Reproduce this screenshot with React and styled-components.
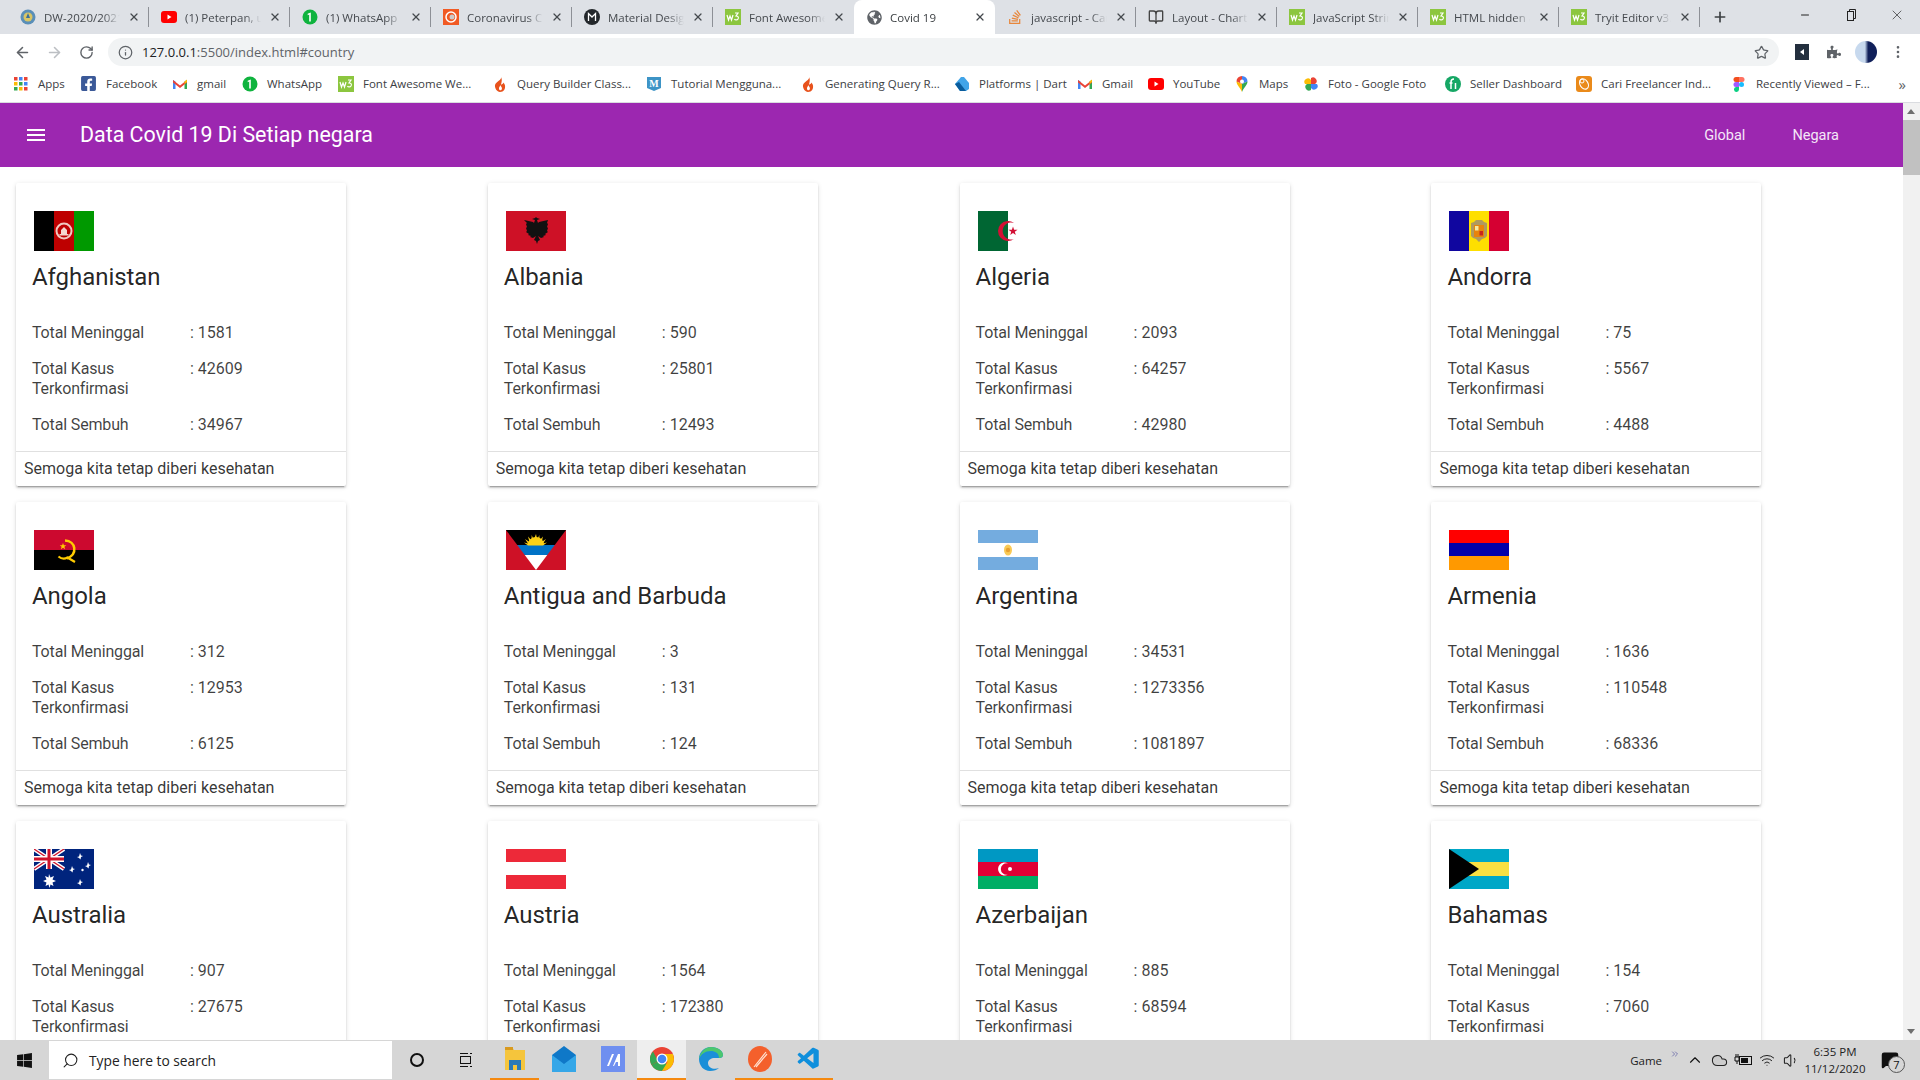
import React from 'react';
import styled, { createGlobalStyle } from 'styled-components';
import { ArrowLeft, ArrowRight, RotateCw, Info, Star, EllipsisVertical, Plus, Minus, X, Search, BookOpen, ChevronUp, ChevronsRight, Cloud, Wifi, Volume1, MessageSquare } from 'lucide-react';
import { MdMenu } from 'react-icons/md';
import { FaPuzzlePiece, FaWindows, FaGlobeAmericas, FaStackOverflow, FaFacebookSquare } from 'react-icons/fa';
import { VscVscode } from 'react-icons/vsc';

const W3 = () => (
  <svg width='16' height='16' viewBox='0 0 16 16'>
    <rect width='16' height='16' fill='#8cc63f' />
    <path d='M2 6l1.5 5 1.5-4 1.5 4L8 6M10 4h3l-2 3c2 0 3 1 2 3-1 1.500-3 1-3.500 0' fill='none' stroke='#fff' strokeWidth='1.200' />
  </svg>
);
const Youtube = () => (
  <svg width='16' height='16' viewBox='0 0 16 16'>
    <rect y='2' width='16' height='12' rx='3' fill='#f00' />
    <path d='M6.500 5.500v5l4-2.500z' fill='#fff' />
  </svg>
);
const Whatsapp = () => (
  <svg width='16' height='16' viewBox='0 0 16 16'>
    <circle cx='8' cy='8' r='7.500' fill='#0fb33e' />
    <path d='M8.800 3.500v9H7.200V5.600l-1.500.6V4.800z' fill='#fff' />
  </svg>
);
const Gmail = () => (
  <svg width='16' height='16' viewBox='0 0 16 16'>
    <path d='M1 13V4l2.500 1.500V13z' fill='#4285f4' />
    <path d='M15 13V4l-2.500 1.500V13z' fill='#34a853' />
    <path d='M1 4l7 5.500L15 4v2.500L8 12 1 6.500z' fill='#ea4335' />
    <path d='M12.500 5.500L15 3.500V6l-2.500 2z' fill='#fbbc04' />
  </svg>
);
const Flame = () => (
  <svg width='16' height='16' viewBox='0 0 16 16'>
    <path d='M9 1c1 3-5 4.500-6 8C2.500 12 5 16 8 16c4 0 5.500-3 5-6.500-.3-1.500-1-2-1.500-3C11 8 9.800 8.500 9 8.500 9.500 6 10.500 3.500 9 1z' fill='#e8521c' />
    <path d='M8 9c.5 1.500-1.500 2-1 4 .2.800 1 1.500 1.800 1.300 1.200-.4 1.500-2 .7-3.300C9 10 8.500 10 8 9z' fill='#fff' />
  </svg>
);
const Tutorial = () => (
  <svg width='16' height='16' viewBox='0 0 16 16'>
    <path d='M1 1h14v11l-7 3-7-3z' fill='#3d94c6' />
    <text x='8' y='11' fontSize='10' fontFamily='Liberation Serif, serif' fontWeight='700' fill='#fff' textAnchor='middle'>M</text>
  </svg>
);
const Dart = () => (
  <svg width='16' height='16' viewBox='0 0 16 16'>
    <path d='M1 8l6-7h3l5 6v6l-3 2H6z' fill='#41a4e8' />
    <path d='M1 8l5 7h6L5 6z' fill='#0a5c9c' />
  </svg>
);
const MapPin = () => (
  <svg width='16' height='16' viewBox='0 0 16 16'>
    <path d='M8 0a5.500 5.500 0 0 1 5.500 5.500L8 8z' fill='#4285f4' />
    <path d='M8 0a5.500 5.500 0 0 0-5.500 5.500L8 8z' fill='#ea4335' />
    <path d='M2.500 5.500C2.500 9 6 11 8 16V8z' fill='#fbbc04' />
    <path d='M13.500 5.500C13.500 9 10 11 8 16V8z' fill='#34a853' />
    <circle cx='8' cy='5.500' r='2' fill='#fff' />
  </svg>
);
const Photos = () => (
  <svg width='16' height='16' viewBox='0 0 16 16'>
    <path d='M8 8H2a3 3 0 0 1 6-4z' fill='#fbbc04' />
    <path d='M8 8V2a3 3 0 0 1 4 6z' fill='#ea4335' />
    <path d='M8 8h6a3 3 0 0 1-6 4z' fill='#4285f4' />
    <path d='M8 8v6a3 3 0 0 1-4-6z' fill='#34a853' />
  </svg>
);
const Seller = () => (
  <svg width='16' height='16' viewBox='0 0 16 16'>
    <circle cx='8' cy='8' r='8' fill='#16a765' />
    <path d='M6 13V6c0-2 1-3 3-3M4.500 7h3M10.500 7v6' fill='none' stroke='#fff' strokeWidth='1.500' />
  </svg>
);
const Freelancer = () => (
  <svg width='16' height='16' viewBox='0 0 16 16'>
    <rect width='16' height='16' rx='3' fill='#ea8a1a' />
    <ellipse cx='8' cy='8' rx='4' ry='5.500' transform='rotate(-30 8 8)' fill='none' stroke='#fff' strokeWidth='1.200' />
    <circle cx='6' cy='5' r='2' fill='none' stroke='#fff' />
  </svg>
);
const Figma = () => (
  <svg width='16' height='16' viewBox='0 0 16 16'>
    <path d='M5 1h3v5H5a2.500 2.500 0 0 1 0-5z' fill='#f24e1e' />
    <path d='M8 1h3a2.500 2.500 0 0 1 0 5H8z' fill='#ff7262' />
    <path d='M5 6h3v5H5a2.500 2.500 0 0 1 0-5z' fill='#a259ff' />
    <circle cx='10.500' cy='8.500' r='2.500' fill='#1abcfe' />
    <path d='M5 11h3v2.500a2.500 2.500 0 1 1-3-2.500z' fill='#0acf83' />
  </svg>
);
const AppsGrid = () => (
  <svg width='16' height='16' viewBox='0 0 16 16'>
    {['#ea4335', '#4285f4', '#ea4335', '#fbbc04', '#34a853', '#4285f4', '#34a853', '#fbbc04', '#ea4335'].map((c, i) => (
      <rect key={i} x={1 + (i % 3) * 5} y={1 + Math.floor(i / 3) * 5} width='3.500' height='3.500' fill={c} />
    ))}
  </svg>
);
const DwLogo = () => (
  <svg width='16' height='16' viewBox='0 0 16 16'>
    <circle cx='8' cy='8' r='7.500' fill='#5a8fb8' />
    <circle cx='8' cy='8' r='4.500' fill='#d9c565' />
    <path d='M8 4l2 5H6z' fill='#3b6f98' />
  </svg>
);
const CoronaLogo = () => (
  <svg width='16' height='16' viewBox='0 0 16 16'>
    <rect width='16' height='16' fill='#f15a24' />
    <circle cx='8' cy='8' r='5' fill='none' stroke='#fff' strokeWidth='1.500' />
    <circle cx='9' cy='8' r='2.500' fill='#ccc' />
  </svg>
);
const MaterialLogo = () => (
  <svg width='16' height='16' viewBox='0 0 16 16'>
    <circle cx='8' cy='8' r='8' fill='#23272b' />
    <path d='M4.500 12V4.500L8 8l3.500-3.500V12' fill='none' stroke='#fff' strokeWidth='1.300' />
  </svg>
);

const tabs = [
  { title: 'DW-2020/2021 - Dumbways', icon: <DwLogo />, sep: true },
  { title: '(1) Peterpan, untuk', icon: <Youtube />, sep: true },
  { title: '(1) WhatsApp', icon: <Whatsapp />, sep: true },
  { title: 'Coronavirus COVID-19', icon: <CoronaLogo />, sep: true },
  { title: 'Material Design', icon: <MaterialLogo />, sep: true },
  { title: 'Font Awesome Icons', icon: <W3 />, sep: false },
  { title: 'Covid 19', icon: <FaGlobeAmericas size={15} color='#5f6368' />, active: true },
  { title: 'javascript - Can', icon: <FaStackOverflow size={16} color='#e8863a' />, sep: true },
  { title: 'Layout - Chart.js', icon: <BookOpen size={16} color='#444' />, sep: true },
  { title: 'JavaScript String', icon: <W3 />, sep: true },
  { title: 'HTML hidden at', icon: <W3 />, sep: true },
  { title: 'Tryit Editor v3.6', icon: <W3 />, sep: true },
];

const bookmarks = [
  { label: 'Apps', icon: <AppsGrid />, width: 67 },
  { label: 'Facebook', icon: <FaFacebookSquare size={17} color='#3b5998' />, width: 92 },
  { label: 'gmail', icon: <Gmail />, width: 70 },
  { label: 'WhatsApp', icon: <Whatsapp />, width: 96 },
  { label: 'Font Awesome We...', icon: <W3 />, width: 154 },
  { label: 'Query Builder Class...', icon: <Flame />, width: 154 },
  { label: 'Tutorial Mengguna...', icon: <Tutorial />, width: 154 },
  { label: 'Generating Query R...', icon: <Flame />, width: 154 },
  { label: 'Platforms | Dart', icon: <Dart />, width: 123 },
  { label: 'Gmail', icon: <Gmail />, width: 71 },
  { label: 'YouTube', icon: <Youtube />, width: 86 },
  { label: 'Maps', icon: <MapPin />, width: 69 },
  { label: 'Foto - Google Foto', icon: <Photos />, width: 142 },
  { label: 'Seller Dashboard', icon: <Seller />, width: 131 },
  { label: 'Cari Freelancer Ind...', icon: <Freelancer />, width: 155 },
  { label: 'Recently Viewed – F...', icon: <Figma />, width: 150 },
];

const flags = {
  Afghanistan: (
    <>
      <rect width='20' height='40' fill='#000' />
      <rect x='20' width='20' height='40' fill='#be0000' />
      <rect x='40' width='20' height='40' fill='#009900' />
      <circle cx='30' cy='20' r='7.500' fill='none' stroke='#f0c8c0' strokeWidth='2' />
      <path d='M25.500 23h9v1.500h-9zM27 19l3-3 3 3v4h-6z' fill='#f4d8d0' />
    </>
  ),
  Albania: (
    <>
      <rect width='60' height='40' fill='#ce1126' />
      <path d='M18 9l9 2 1 1 1-3-3-1 3-1 1-1 1 1 3 1-3 1 1 3 1-1 9-2-1 3 1 1-1 3 1 1-1 3 1 1-3 2 1 1-3 1 1 1-3 1-3-2 2 4-2 1-1 3-1-3-2-1 2-4-3 2-3-1 1-1-3-1 1-1-3-2 1-1-1-3 1-1-1-3 1-1z' fill='#111' />
    </>
  ),
  Algeria: (
    <>
      <rect width='30' height='40' fill='#006633' />
      <path d='M36 12A10 10 0 1 0 36 28A8.500 8.500 0 1 1 36 12Z' fill='#d21034' />
      <path d='M35 15.500l1.100 3.200 3.400.1-2.700 2 1 3.200-2.800-1.900-2.800 1.900 1-3.200-2.700-2 3.400-.1z' fill='#d21034' />
    </>
  ),
  Andorra: (
    <>
      <rect width='20' height='40' fill='#10069f' />
      <rect x='20' width='20' height='40' fill='#fedf00' />
      <rect x='40' width='20' height='40' fill='#d50032' />
      <path d='M22 12l3-1 2-2h6l2 2 3 1v13l-2 2-3 1-3 3-3-3-3-1-2-2z' fill='#b09a5e' />
      <rect x='25' y='14' width='10' height='12' fill='#e8840c' />
      <rect x='26' y='15' width='3.500' height='4.500' fill='#f6e9a0' />
      <rect x='30.500' y='20' width='3.500' height='4.500' fill='#c8261c' />
    </>
  ),
  Angola: (
    <>
      <rect width='60' height='20' fill='#cc092f' />
      <rect y='20' width='60' height='20' fill='#000' />
      <path d='M31 10.500C42 11 44 24 33 28.500' fill='none' stroke='#ffcb00' strokeWidth='2.500' />
      <path d='M24.500 26.500C28 29.500 31 29 33.500 27.500L41 32' fill='none' stroke='#ffcb00' strokeWidth='2.300' />
      <path d='M29 13l.9 2.300h2.400l-1.900 1.500.7 2.400-2.100-1.400-2.100 1.400.7-2.400-1.900-1.500h2.400z' fill='#ffcb00' />
    </>
  ),
  'Antigua and Barbuda': (
    <>
      <rect width='60' height='40' fill='#ce1126' />
      <path d='M0 0h60L48.750 15H11.250z' fill='#000' />
      <path d='M11.250 15H48.750L41.250 25H18.750z' fill='#0072c6' />
      <path d='M18.750 25H41.250L30 40z' fill='#fff' />
      <path d='M22 15a8 8 0 0 1 16 0z' fill='#fcd116' />
      <path d='M30 4l1.300 6 2-5 .2 5.500 3.500-4-1.500 5.500 4.500-3-3 4.500 4-1-4 3H22l-4-3 4 1-3-4.500 4.500 3L22 6.500l3.500 4 .2-5.500 2 5z' fill='#fcd116' />
    </>
  ),
  Argentina: (
    <>
      <rect width='60' height='13' fill='#74acdf' />
      <rect y='27' width='60' height='13' fill='#74acdf' />
      <ellipse cx='30' cy='20' rx='4' ry='5.500' fill='#f6b40e' opacity='0.700' />
      <circle cx='30' cy='20' r='2.200' fill='#e8a030' />
    </>
  ),
  Armenia: (
    <>
      <rect width='60' height='13' fill='#f00' />
      <rect y='13' width='60' height='13' fill='#0000aa' />
      <rect y='26' width='60' height='14' fill='#f90' />
    </>
  ),
  Australia: (
    <>
      <rect width='60' height='40' fill='#00247d' />
      <path d='M0 0l30 20M30 0L0 20' stroke='#fff' strokeWidth='4' />
      <path d='M0 0l30 20M30 0L0 20' stroke='#cf142b' strokeWidth='1.300' />
      <path d='M15 0v20M0 10h30' stroke='#fff' strokeWidth='6' />
      <path d='M15 0v20M0 10h30' stroke='#cf142b' strokeWidth='3' />
      <path d='M15 25l1.500 3.500 3.500-1.500-1.500 3.500 3.500 1.500-3.500 1.500 1 3.500-3-1.500-1 3.500-1-3.500-3 1.500 1-3.500-3.500-1.500 3.500-1.500-1.500-3.500 3.500 1.500z' fill='#fff' />
      <path d='M46 4l1 2.500 2 .5-2 1-.5 2.500L45 9l-2-1 2-.5zM54 13l1 2.500 2 .5-2 1-.5 2.500L53 18l-2-1 2-.5zM38 17l1 2.500 2 .5-2 1-.5 2.500L37 22l-2-1 2-.5zM46 30l1 2.500 2 .5-2 1-.5 2.500L45 35l-2-1 2-.5z' fill='#fff' />
      <circle cx='48.500' cy='21' r='1.200' fill='#fff' />
    </>
  ),
  Austria: (
    <>
      <rect width='60' height='13' fill='#ed2939' />
      <rect y='26' width='60' height='14' fill='#ed2939' />
    </>
  ),
  Azerbaijan: (
    <>
      <rect width='60' height='13' fill='#0098c3' />
      <rect y='13' width='60' height='14' fill='#e00034' />
      <rect y='27' width='60' height='13' fill='#00ae65' />
      <path d='M30 14.500A6.500 6.500 0 1 0 30 25.500A5.700 5.700 0 1 1 30 14.500Z' fill='#fff' />
      <circle cx='32' cy='20' r='2' fill='#fff' />
    </>
  ),
  Bahamas: (
    <>
      <rect width='60' height='40' fill='#00a7c7' />
      <rect y='13' width='60' height='14' fill='#fae042' />
      <path d='M0 0l30 20L0 40z' fill='#000' />
    </>
  ),
};

const countries = [
  { name: 'Afghanistan', deaths: 1581, cases: 42609, recovered: 34967 },
  { name: 'Albania', deaths: 590, cases: 25801, recovered: 12493 },
  { name: 'Algeria', deaths: 2093, cases: 64257, recovered: 42980 },
  { name: 'Andorra', deaths: 75, cases: 5567, recovered: 4488 },
  { name: 'Angola', deaths: 312, cases: 12953, recovered: 6125 },
  { name: 'Antigua and Barbuda', deaths: 3, cases: 131, recovered: 124 },
  { name: 'Argentina', deaths: 34531, cases: 1273356, recovered: 1081897 },
  { name: 'Armenia', deaths: 1636, cases: 110548, recovered: 68336 },
  { name: 'Australia', deaths: 907, cases: 27675 },
  { name: 'Austria', deaths: 1564, cases: 172380 },
  { name: 'Azerbaijan', deaths: 885, cases: 68594 },
  { name: 'Bahamas', deaths: 154, cases: 7060 },
];

const CountryCard = ({ name, deaths, cases, recovered }) => (
  <Card>
    <CardBody>
      <Flag viewBox='0 0 60 40'>{flags[name]}</Flag>
      <CardTitle>{name}</CardTitle>
      <Stats>
        <StatLabel>Total Meninggal</StatLabel>
        <span>: {deaths}</span>
        <StatLabel>Total Kasus Terkonfirmasi</StatLabel>
        <span>: {cases}</span>
        {recovered && <StatLabel>Total Sembuh</StatLabel>}
        {recovered && <span>: {recovered}</span>}
      </Stats>
    </CardBody>
    <CardFooter>{recovered && 'Semoga kita tetap diberi kesehatan'}</CardFooter>
  </Card>
);

const Browser = () => (
  <>
    <TabStrip>
      {tabs.map((tab) => (
        <Tab key={tab.title} $active={tab.active} $sep={tab.sep}>
          <TabIcon>{tab.icon}</TabIcon>
          <TabTitle>{tab.title}</TabTitle>
          <X size={12} strokeWidth={2.5} color='#45494e' />
        </Tab>
      ))}
      <NewTab>
        <Plus size={16} strokeWidth={2.5} color='#3c4043' />
      </NewTab>
      <WindowControls>
        <WindowButton><Minus size={12} /></WindowButton>
        <WindowButton>
          <svg width='12' height='14' viewBox='0 0 12 14' fill='none' stroke='#222'>
            <rect x='2.500' y='3.500' width='6' height='9' />
            <path d='M4.500 3.500v-2h6v9h-2' />
          </svg>
        </WindowButton>
        <WindowButton><X size={16} strokeWidth={1} /></WindowButton>
      </WindowControls>
    </TabStrip>
    <Toolbar>
      <ToolButton><ArrowLeft size={17} color='#5f6368' strokeWidth={2.200} /></ToolButton>
      <ToolButton><ArrowRight size={17} color='#bcbfc3' strokeWidth={2.200} /></ToolButton>
      <ToolButton><RotateCw size={15} color='#5f6368' strokeWidth={2.200} /></ToolButton>
      <AddressBar>
        <Info size={15} color='#5f6368' />
        <Url><b>127.0.0.1</b>:5500/index.html#country</Url>
        <Star size={15} color='#5f6368' />
      </AddressBar>
      <ToolButton>
        <svg width='14' height='16' viewBox='0 0 14 16'>
          <rect width='14' height='16' fill='#232f3e' />
          <path d='M9 5v6L5 8z' fill='#fff' />
        </svg>
      </ToolButton>
      <ToolButton><FaPuzzlePiece size={14} color='#5f6368' /></ToolButton>
      <ToolButton><Avatar /></ToolButton>
      <ToolButton><EllipsisVertical size={16} color='#5f6368' /></ToolButton>
    </Toolbar>
    <BookmarkBar>
      {bookmarks.map((item) => (
        <Bookmark key={item.label} $width={item.width}>
          {item.icon}
          <span>{item.label}</span>
        </Bookmark>
      ))}
      <BookmarkMore>»</BookmarkMore>
    </BookmarkBar>
  </>
);

const Windows = () => (
  <Taskbar>
    <StartButton><FaWindows size={17} color='#111' /></StartButton>
    <SearchBox>
      <SearchIcon size={17} color='#222' strokeWidth={1.500} />
      Type here to search
    </SearchBox>
    <ShellButton>
      <svg width='16' height='16' viewBox='0 0 16 16'><circle cx='8' cy='8' r='6' fill='none' stroke='#111' strokeWidth='2' /></svg>
    </ShellButton>
    <ShellButton>
      <svg width='16' height='18' viewBox='0 0 16 18' fill='none' stroke='#111'>
        <rect x='2.500' y='5.500' width='10' height='7' />
        <path d='M2 2.500h8M12 2.500h2M2 15.500h8M12 15.500h2' />
      </svg>
    </ShellButton>
    <AppSlot $open>
      <svg width='24' height='26' viewBox='0 0 24 26'>
        <path d='M2 1h7l2 3h11v20H2z' fill='#f5c53c' />
        <rect x='2' y='1' width='8' height='3' fill='#d99a1f' />
        <path d='M6 24V14h12v10h-4v-5h-4v5z' fill='#2a7ab8' />
      </svg>
    </AppSlot>
    <AppSlot>
      <svg width='24' height='26' viewBox='0 0 24 26'>
        <path d='M0 9L12 0l12 9v17H0z' fill='#0f78c8' />
        <path d='M0 9l12 9 12-9v17H0z' fill='#35a7e8' />
      </svg>
    </AppSlot>
    <AppSlot>
      <svg width='24' height='26' viewBox='0 0 24 26'>
        <rect width='24' height='26' fill='#6f8ff0' />
        <path d='M6 20l5-12h2l-5 12zM12 20l5-12h2v12h-2v-4h-2l-2 4z' fill='#fff' />
      </svg>
    </AppSlot>
    <AppSlot $open $active>
      <svg width='24' height='24' viewBox='0 0 24 24'>
        <circle cx='12' cy='12' r='12' fill='#ea4335' />
        <path d='M12 12L1.600 18A12 12 0 0 0 12 24l5-6z' fill='#34a853' />
        <path d='M12 7h10.800A12 12 0 0 1 12 24l5.500-9z' fill='#fbbc04' />
        <path d='M1.600 18A12 12 0 0 1 3 4.500L8 14z' fill='#34a853' />
        <circle cx='12' cy='12' r='5.500' fill='#fff' />
        <circle cx='12' cy='12' r='4.300' fill='#4285f4' />
      </svg>
    </AppSlot>
    <AppSlot>
      <svg width='24' height='26' viewBox='0 0 24 26'>
        <path d='M12 1C5 1 0 6 0 13c0 7 5 12 11 12 4 0 7-1 9-3-5 2-11 0-11-5 0-3 3-5 7-5 3 0 8 1 8-3C24 5 19 1 12 1z' fill='#1b8fd8' />
        <path d='M0 13C1 6 6 1 12 1c7 0 12 4 12 8 0 2-2 3-4 3C20 7 16 5 12 5 6 5 2 8 0 13z' fill='#4cc76f' />
      </svg>
    </AppSlot>
    <AppSlot $open>
      <svg width='24' height='26' viewBox='0 0 24 26'>
        <ellipse cx='12' cy='13' rx='12' ry='13' fill='#f4602c' />
        <path d='M6 21L18 6M8 21l11-13' stroke='#ffe0d0' strokeWidth='1.200' />
      </svg>
    </AppSlot>
    <AppSlot $open>
      <VscVscode size={26} color='#0f8fdc' />
    </AppSlot>
    <Tray>
      <GameLabel>Game</GameLabel>
      <TrayMore><ChevronsRight size={10} color='#6a6aa8' /></TrayMore>
      <TrayIcon><ChevronUp size={18} color='#111' strokeWidth={1.500} /></TrayIcon>
      <TrayIcon><Cloud size={17} color='#222' fill='#ccc' strokeWidth={1.500} /></TrayIcon>
      <TrayIcon>
        <svg width='18' height='12' viewBox='0 0 18 12' fill='none' stroke='#111'>
          <rect x='5.500' y='2.500' width='12' height='8' />
          <rect x='7.500' y='4.500' width='6' height='4' fill='#111' />
          <path d='M1 3h4v4H1zM2 0v3M4 0v3M3 7v3' />
        </svg>
      </TrayIcon>
      <TrayIcon><Wifi size={16} color='#222' strokeWidth={1.500} /></TrayIcon>
      <TrayIcon><Volume1 size={17} color='#222' strokeWidth={1.500} /></TrayIcon>
      <Clock>
        <span>6:35 PM</span>
        <span>11/12/2020</span>
      </Clock>
      <Notification>
        <MessageSquare size={18} color='#111' fill='#111' />
        <NotificationBadge>7</NotificationBadge>
      </Notification>
    </Tray>
  </Taskbar>
);

const App = () => (
  <>
    <GlobalStyle />
    <Screen>
      <Browser />
      <Viewport>
        <Page>
          <Navbar>
            <MdMenu size={24} color='#fff' />
            <Brand>Data Covid 19 Di Setiap negara</Brand>
            <NavLinks>
              <NavLink>Global</NavLink>
              <NavLink>Negara</NavLink>
            </NavLinks>
          </Navbar>
          <CardGrid>
            {countries.map((country) => (
              <CountryCard key={country.name} {...country} />
            ))}
          </CardGrid>
        </Page>
        <Scrollbar>
          <ScrollArrow />
          <ScrollThumb />
          <ScrollArrow $down />
        </Scrollbar>
      </Viewport>
      <Windows />
    </Screen>
  </>
);

export default App;

const GlobalStyle = createGlobalStyle`
  html, body {
    margin: 0;
    height: 100%;
    overflow: hidden;
  }
  * {
    box-sizing: border-box;
  }
`;

const Screen = styled.div`
  display: flex;
  flex-direction: column;
  width: 1920px;
  height: 1080px;
  overflow: hidden;
  background-color: #fff;
  font-family: Roboto, 'Liberation Sans', sans-serif;
`;

const TabStrip = styled.div`
  display: flex;
  align-items: stretch;
  height: 34px;
  padding-left: 8px;
  background-color: #dee1e6;
  font-family: 'Open Sans', 'Liberation Sans', sans-serif;
`;

const Tab = styled.div`
  position: relative;
  display: flex;
  align-items: center;
  gap: 8px;
  width: 141px;
  padding: 0 9px 0 12px;
  font-size: 11.5px;
  color: ${(props) => (props.$active ? '#3c4043' : '#45494e')};
  background-color: ${(props) => (props.$active ? '#fff' : 'transparent')};
  border-radius: ${(props) => (props.$active ? '8px 8px 0 0' : '0')};

  ${(props) =>
    props.$sep &&
    `&::after {
      content: '';
      position: absolute;
      right: 0;
      top: 7px;
      bottom: 7px;
      width: 1px;
      background-color: #8d9096;
    }`}
`;

const TabIcon = styled.span`
  display: flex;
  align-items: center;
  justify-content: center;
  flex: none;
  width: 16px;
  height: 16px;
`;

const TabTitle = styled.span`
  flex: 1;
  min-width: 0;
  overflow: hidden;
  white-space: nowrap;
  -webkit-mask-image: linear-gradient(to right, #000 78%, transparent 100%);
  mask-image: linear-gradient(to right, #000 78%, transparent 100%);
`;

const NewTab = styled.div`
  display: flex;
  align-items: center;
  justify-content: center;
  width: 28px;
  margin-left: 6px;
`;

const WindowControls = styled.div`
  display: flex;
  margin-left: auto;
`;

const WindowButton = styled.div`
  display: flex;
  align-items: center;
  justify-content: center;
  width: 46px;
  height: 30px;
  color: #222;
`;

const Toolbar = styled.div`
  display: flex;
  align-items: center;
  height: 34px;
  padding: 2px 6px 0;
  background-color: #fff;
`;

const ToolButton = styled.div`
  display: flex;
  align-items: center;
  justify-content: center;
  flex: none;
  width: 32px;
  height: 28px;
`;

const AddressBar = styled.div`
  display: flex;
  align-items: center;
  flex: 1;
  height: 28px;
  margin: 0 7px 0 6px;
  padding: 0 10px;
  gap: 9px;
  border-radius: 14px;
  background-color: #f1f3f4;
`;

const Url = styled.div`
  flex: 1;
  font-family: 'Open Sans', 'Liberation Sans', sans-serif;
  font-size: 13px;
  color: #5f6368;

  b {
    font-weight: 400;
    color: #202124;
  }
`;

const Avatar = styled.span`
  width: 22px;
  height: 22px;
  border-radius: 50%;
  background: linear-gradient(90deg, #c7d9ee 0 45%, #10205a 60% 100%);
`;

const BookmarkBar = styled.div`
  display: flex;
  align-items: center;
  height: 35px;
  padding: 0 14px 3px 13px;
  background-color: #fff;
  border-bottom: 1px solid #dadce0;
  font-family: 'Open Sans', 'Liberation Sans', sans-serif;
  font-size: 11.5px;
  color: #3c4043;
`;

const Bookmark = styled.div`
  display: flex;
  align-items: center;
  flex: none;
  gap: 9px;
  width: ${(props) => props.$width}px;
  white-space: nowrap;

  svg {
    flex: none;
  }
`;

const BookmarkMore = styled.span`
  margin-left: auto;
  font-size: 15px;
  color: #5f6368;
`;

const Viewport = styled.div`
  display: flex;
  flex: 1;
  min-height: 0;
`;

const Page = styled.div`
  flex: 1;
  min-width: 0;
  overflow: hidden;
`;

const Navbar = styled.nav`
  display: flex;
  align-items: center;
  gap: 32px;
  height: 64px;
  padding: 0 64px 0 24px;
  background-color: #9c27b0;
`;

const Brand = styled.span`
  padding-bottom: 2px;
  font-size: 21.4px;
  color: #fff;
`;

const NavLinks = styled.div`
  display: flex;
  gap: 47px;
  margin-left: auto;
`;

const NavLink = styled.a`
  font-size: 14.5px;
  color: #f5e6f8;
`;

const CardGrid = styled.div`
  display: grid;
  grid-template-columns: repeat(4, 330px);
  column-gap: 141.8px;
  row-gap: 16px;
  padding: 16px;
`;

const Card = styled.article`
  display: flex;
  flex-direction: column;
  height: 303px;
  border-radius: 2px;
  background-color: #fff;
  box-shadow: 0 2px 2px 0 rgba(0, 0, 0, 0.14), 0 3px 1px -2px rgba(0, 0, 0, 0.2), 0 1px 5px 0 rgba(0, 0, 0, 0.12);
`;

const CardBody = styled.div`
  flex: 1;
  padding: 28px 16px 0;
`;

const Flag = styled.svg`
  display: block;
  width: 60px;
  height: 40px;
  margin: 0 0 10px 2px;
`;

const CardTitle = styled.h2`
  margin: 0 0 30px;
  font-size: 24px;
  font-weight: 400;
  line-height: 32px;
  letter-spacing: -0.05px;
  color: rgba(0, 0, 0, 0.87);
`;

const Stats = styled.div`
  display: grid;
  grid-template-columns: 158px 1fr;
  row-gap: 16px;
  font-size: 16px;
  line-height: 20px;
  color: rgba(0, 0, 0, 0.75);
`;

const StatLabel = styled.span`
  letter-spacing: -0.15px;
`;

const CardFooter = styled.footer`
  height: 35px;
  padding: 7px 8px 0;
  border-top: 1px solid rgba(0, 0, 0, 0.12);
  font-size: 16px;
  line-height: 20px;
  color: rgba(0, 0, 0, 0.8);
`;

const Scrollbar = styled.div`
  display: flex;
  flex-direction: column;
  flex: none;
  width: 17px;
  background-color: #f1f1f1;
`;

const ScrollArrow = styled.div`
  width: 0;
  height: 0;
  margin: ${(props) => (props.$down ? 'auto 4px 6px' : '6px 4px 0')};
  border-left: 4.5px solid transparent;
  border-right: 4.5px solid transparent;
  border-${(props) => (props.$down ? 'top' : 'bottom')}: 5px solid #6f6f6f;
`;

const ScrollThumb = styled.div`
  width: 17px;
  height: 55px;
  margin-top: 6px;
  background-color: #c1c1c1;
`;

const Taskbar = styled.div`
  display: flex;
  align-items: center;
  flex: none;
  height: 40px;
  background-color: #d6d6d6;
  font-family: 'Open Sans', 'Liberation Sans', sans-serif;
`;

const StartButton = styled.div`
  display: flex;
  align-items: center;
  justify-content: center;
  width: 48px;
  height: 40px;
`;

const SearchBox = styled.div`
  display: flex;
  align-items: center;
  gap: 10px;
  width: 343px;
  height: 38px;
  margin-left: 1px;
  padding-left: 13px;
  background-color: #fff;
  font-size: 13.8px;
  color: #222;
`;

const SearchIcon = styled(Search)`
  transform: scaleX(-1);
`;

const ShellButton = styled.div`
  display: flex;
  align-items: center;
  justify-content: center;
  width: 49px;
  height: 40px;
`;

const AppSlot = styled.div`
  display: flex;
  align-items: center;
  justify-content: center;
  width: 49px;
  height: 40px;
  background-color: ${(props) => (props.$active ? '#eeeeee' : 'transparent')};
  border-bottom: 2px solid ${(props) => (props.$open ? '#f5890f' : 'transparent')};
`;

const Tray = styled.div`
  display: flex;
  align-items: center;
  margin-left: auto;
  height: 40px;
`;

const GameLabel = styled.span`
  font-size: 11.5px;
  color: #222;
`;

const TrayMore = styled.span`
  align-self: flex-start;
  margin: 2px 3px 0 8px;
`;

const TrayIcon = styled.span`
  display: flex;
  align-items: center;
  justify-content: center;
  width: 24px;
`;

const Clock = styled.div`
  display: flex;
  flex-direction: column;
  align-items: center;
  gap: 2px;
  width: 66px;
  margin-left: -1px;
  font-size: 11.5px;
  line-height: 15px;
  color: #222;
`;

const Notification = styled.div`
  position: relative;
  display: flex;
  width: 52px;
  padding-left: 13px;
`;

const NotificationBadge = styled.span`
  position: absolute;
  left: 20px;
  top: 5px;
  width: 17px;
  height: 17px;
  border: 1px solid #555;
  border-radius: 50%;
  background-color: #d6d6d6;
  font-size: 11px;
  line-height: 15px;
  text-align: center;
  color: #111;
`;
